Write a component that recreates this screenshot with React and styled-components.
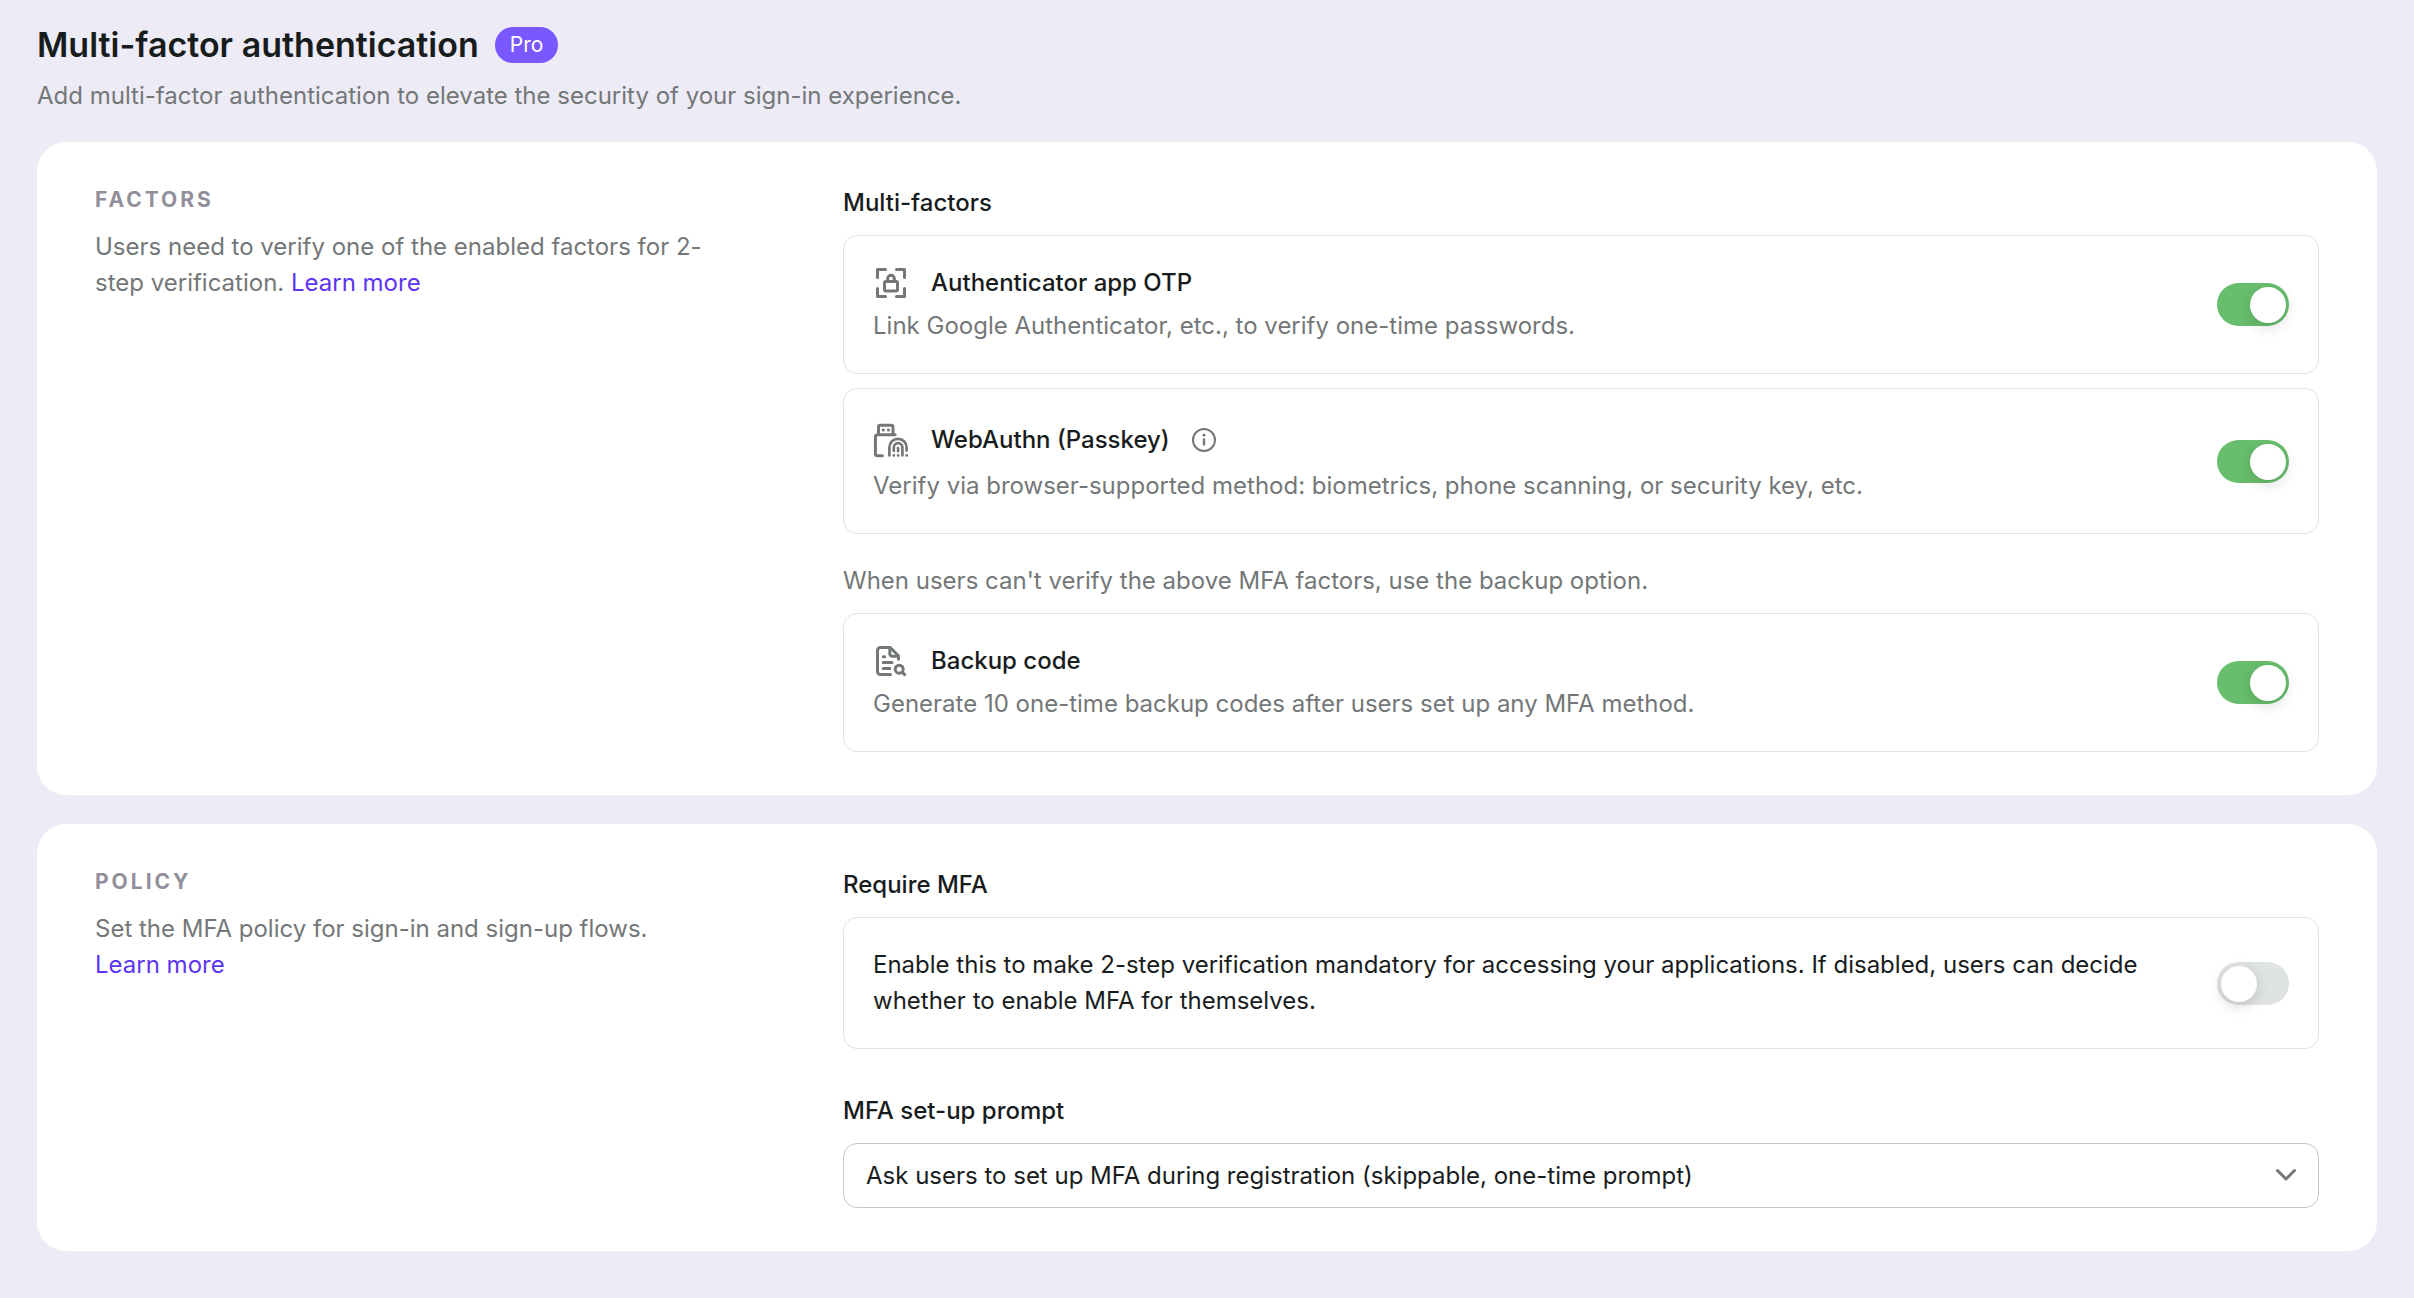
import React, { useState } from "react";
import styled, { createGlobalStyle } from "styled-components";

const GlobalStyle = createGlobalStyle`
  *,
  *::before {
    box-sizing: border-box;
  }

  body {
    margin: 0;
    background: #ecebf6;
    color: #191c1d;
    font-family: Inter, "Liberation Sans", sans-serif;
    font-size: 24px;
    line-height: 36px;
  }
`;

const Page = styled.main`
  padding: 20px 37px 47px;
`;

const PageHeader = styled.header`
  display: flex;
  flex-direction: column;
  gap: 8px;
  margin-bottom: 28px;
`;

const TitleRow = styled.div`
  display: flex;
  align-items: center;
  gap: 16px;
`;

const PageTitle = styled.h1`
  margin: 0;
  font-size: 34px;
  font-weight: 600;
  line-height: 50px;
`;

const ProTag = styled.span`
  padding: 0 15px;
  border-radius: 18px;
  background: #7958ff;
  color: #fff;
  font-size: 21px;
  line-height: 36px;
`;

const Muted = styled.p`
  margin: 0;
  color: #747778;
`;

const Cards = styled.div`
  display: flex;
  flex-direction: column;
  gap: 29px;
`;

const Card = styled.section`
  display: grid;
  grid-template-columns: minmax(0, 648px) minmax(0, 1fr);
  gap: 100px;
  padding: 43px 58px;
  border-radius: 29px;
  background: #fff;
`;

const CardIntro = styled.div`
  display: flex;
  flex-direction: column;
  gap: 15px;
`;

const CardTitle = styled.h2`
  margin: 0;
  color: #928f9a;
  font-size: 21px;
  font-weight: 700;
  line-height: 29px;
  letter-spacing: 3px;
  text-transform: uppercase;
`;

const Link = styled.a`
  color: #5d34f2;
  text-decoration: none;
  white-space: nowrap;

  &:hover {
    text-decoration: underline;
  }
`;

const Fields = styled.div`
  display: flex;
  flex-direction: column;
  gap: 44px;
`;

const Field = styled.div`
  display: flex;
  flex-direction: column;
  gap: 14px;
`;

const FieldTitle = styled.h3`
  margin: 0;
  font-size: 24px;
  font-weight: 500;
`;

const FieldLabel = styled.label`
  font-weight: 500;
`;

const BackupHint = styled(Muted)`
  margin-top: 15px;
`;

const Box = styled.div`
  display: flex;
  align-items: center;
  justify-content: space-between;
  gap: 72px;
  padding: 29px;
  border: 1px solid #e0e3e3;
  border-radius: 14px;
`;

const FactorBody = styled.div`
  display: flex;
  flex-direction: column;
  gap: 7px;
`;

const FactorHead = styled.div`
  display: flex;
  align-items: center;
  min-height: ${({ $tall }) => ($tall ? "43px" : "36px")};
`;

const FactorName = styled.label`
  margin-left: 22px;
  font-weight: 500;
`;

const Icon = styled.svg`
  flex: none;
  width: 36px;
  height: 36px;
  fill: none;
  stroke: #747778;
  stroke-width: 3;
  stroke-linecap: round;
  stroke-linejoin: round;
`;

const InfoButton = styled.button`
  display: flex;
  margin: 0 0 0 16px;
  padding: 0;
  border: none;
  background: none;
  cursor: pointer;
`;

const Toggle = styled.input.attrs({ type: "checkbox", role: "switch" })`
  appearance: none;
  flex: none;
  width: 72px;
  height: 43px;
  margin: 0;
  padding: 4px;
  border-radius: 22px;
  background: #dfe3e3;
  cursor: pointer;

  &::before {
    content: "";
    display: block;
    width: 36px;
    height: 36px;
    border-radius: 50%;
    background: #fff;
    box-shadow: 0 4px 14px rgba(0, 0, 0, 0.15);
  }

  &:checked {
    background: #68be6c;
  }

  &:checked::before {
    margin-left: 29px;
  }
`;

const SelectWrapper = styled.div`
  position: relative;
`;

const Select = styled.select`
  appearance: none;
  display: block;
  width: 100%;
  height: 65px;
  padding: 0 72px 0 22px;
  border: 1px solid #c4c7c7;
  border-radius: 14px;
  background: #fff;
  color: inherit;
  font: inherit;
`;

const Chevron = styled(Icon)`
  position: absolute;
  top: 14px;
  right: 15px;
  pointer-events: none;
`;

const OtpIcon = () => (
  <Icon viewBox="0 0 36 36" aria-hidden="true">
    <path d="M12.5 4.5h-8v8M23.5 4.5h8v8M12.5 31.5h-8v-8M23.5 31.5h8v-8" />
    <rect x="11.5" y="16.5" width="13" height="9.5" rx="1.5" />
    <path d="M14.7 16v-2.4a3.3 3.3 0 0 1 6.6 0V16" />
  </Icon>
);

const PasskeyIcon = () => (
  <Icon viewBox="0 0 36 36" aria-hidden="true">
    <path d="M5.5 12V5a1.8 1.8 0 0 1 1.8-1.8h10.9A1.8 1.8 0 0 1 20 5v7" />
    <path d="M22.2 12.7H4.8A2.4 2.4 0 0 0 2.4 15v16.8a2 2 0 0 0 2 2h5" />
    <path d="M10.2 7.9h.1M15.4 7.9h.1" />
    <path
      d="M16.4 33.4v-8a8.6 8.6 0 0 1 17.2 0v3.2M20.8 29v-3.6a4.3 4.3 0 0 1 8.6 0v8M25.1 26v3.2M20.8 33.4h.1M25.1 33.4h.1M33.6 33.4h.1"
      strokeWidth="2.7"
    />
  </Icon>
);

const BackupIcon = () => (
  <Icon viewBox="0 0 36 36" aria-hidden="true">
    <path d="M17.5 31.5H7.5a3 3 0 0 1-3-3v-21a3 3 0 0 1 3-3h9.7l8.3 8.3v3.4" />
    <path d="M16.8 5v5.6a2.6 2.6 0 0 0 2.6 2.6H25" />
    <path d="M10.2 13.8h1.4M10.2 19.6h8.8M10.2 25.4h6.6" />
    <circle cx="26.2" cy="26.2" r="4" />
    <path d="M29.4 29.4l2.2 2.2" />
  </Icon>
);

const InfoIcon = () => (
  <Icon viewBox="0 0 36 36" aria-hidden="true">
    <circle cx="18" cy="18" r="11" strokeWidth="2" />
    <path d="M18 17.4v5.2" strokeWidth="2.4" />
    <path d="M18 13.2h.1" strokeWidth="2.8" />
  </Icon>
);

const Factor = ({ id, icon, name, description, tip }) => {
  const [enabled, setEnabled] = useState(true);

  return (
    <Box>
      <FactorBody>
        <FactorHead $tall={Boolean(tip)}>
          {icon}
          <FactorName htmlFor={id}>{name}</FactorName>
          {tip && (
            <InfoButton type="button" aria-label={tip}>
              <InfoIcon />
            </InfoButton>
          )}
        </FactorHead>
        <Muted>{description}</Muted>
      </FactorBody>
      <Toggle
        id={id}
        checked={enabled}
        onChange={(e) => setEnabled(e.target.checked)}
      />
    </Box>
  );
};

const App = () => {
  const [required, setRequired] = useState(false);

  return (
    <>
      <GlobalStyle />
      <Page>
        <PageHeader>
          <TitleRow>
            <PageTitle>Multi-factor authentication</PageTitle>
            <ProTag>Pro</ProTag>
          </TitleRow>
          <Muted>
            Add multi-factor authentication to elevate the security of your
            sign-in experience.
          </Muted>
        </PageHeader>
        <Cards>
          <Card>
            <CardIntro>
              <CardTitle>Factors</CardTitle>
              <Muted>
                Users need to verify one of the enabled factors for 2-step
                verification. <Link href="#factors">Learn more</Link>
              </Muted>
            </CardIntro>
            <Field>
              <FieldTitle>Multi-factors</FieldTitle>
              <Factor
                id="totp"
                icon={<OtpIcon />}
                name="Authenticator app OTP"
                description="Link Google Authenticator, etc., to verify one-time passwords."
              />
              <Factor
                id="webauthn"
                icon={<PasskeyIcon />}
                name="WebAuthn (Passkey)"
                description="Verify via browser-supported method: biometrics, phone scanning, or security key, etc."
                tip="About passkeys"
              />
              <BackupHint>
                When users can't verify the above MFA factors, use the backup
                option.
              </BackupHint>
              <Factor
                id="backup"
                icon={<BackupIcon />}
                name="Backup code"
                description="Generate 10 one-time backup codes after users set up any MFA method."
              />
            </Field>
          </Card>
          <Card>
            <CardIntro>
              <CardTitle>Policy</CardTitle>
              <Muted>
                Set the MFA policy for sign-in and sign-up flows.{" "}
                <Link href="#policy">Learn more</Link>
              </Muted>
            </CardIntro>
            <Fields>
              <Field>
                <FieldTitle>Require MFA</FieldTitle>
                <Box>
                  <label htmlFor="require">
                    Enable this to make 2-step verification mandatory for
                    accessing your applications. If disabled, users can decide
                    whether to enable MFA for themselves.
                  </label>
                  <Toggle
                    id="require"
                    checked={required}
                    onChange={(e) => setRequired(e.target.checked)}
                  />
                </Box>
              </Field>
              <Field>
                <FieldLabel htmlFor="prompt">MFA set-up prompt</FieldLabel>
                <SelectWrapper>
                  <Select id="prompt">
                    <option>
                      Ask users to set up MFA during registration (skippable,
                      one-time prompt)
                    </option>
                  </Select>
                  <Chevron viewBox="0 0 36 36" aria-hidden="true">
                    <path d="M9.5 13.5l8.5 8.5 8.5-8.5" />
                  </Chevron>
                </SelectWrapper>
              </Field>
            </Fields>
          </Card>
        </Cards>
      </Page>
    </>
  );
};

export default App;
